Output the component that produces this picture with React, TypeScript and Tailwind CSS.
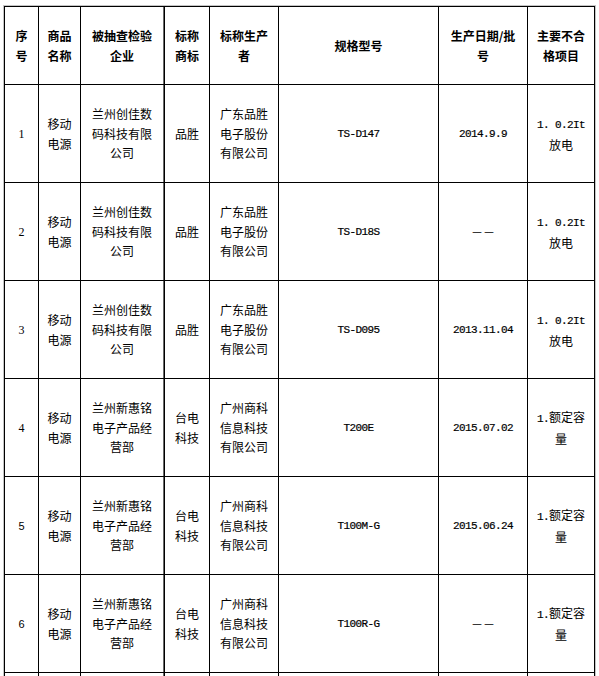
import React from "react";

type Cell = { lines: string[]; kind?: "cjk" | "mono" | "serif" | "sans" };

const header: string[][] = [
  ["序", "号"],
  ["商品", "名称"],
  ["被抽查检验", "企业"],
  ["标称", "商标"],
  ["标称生产", "者"],
  ["规格型号"],
  ["生产日期/批", "号"],
  ["主要不合", "格项目"],
];

const rows: Cell[][] = [
  [
    { lines: ["1"], kind: "serif" },
    { lines: ["移动", "电源"] },
    { lines: ["兰州创佳数", "码科技有限", "公司"] },
    { lines: ["品胜"] },
    { lines: ["广东品胜", "电子股份", "有限公司"] },
    { lines: ["TS-D147"], kind: "mono" },
    { lines: ["2014.9.9"], kind: "mono" },
    { lines: ["1. 0.2It", "放电"] },
  ],
  [
    { lines: ["2"], kind: "serif" },
    { lines: ["移动", "电源"] },
    { lines: ["兰州创佳数", "码科技有限", "公司"] },
    { lines: ["品胜"] },
    { lines: ["广东品胜", "电子股份", "有限公司"] },
    { lines: ["TS-D18S"], kind: "mono" },
    { lines: ["－－"] },
    { lines: ["1. 0.2It", "放电"] },
  ],
  [
    { lines: ["3"], kind: "serif" },
    { lines: ["移动", "电源"] },
    { lines: ["兰州创佳数", "码科技有限", "公司"] },
    { lines: ["品胜"] },
    { lines: ["广东品胜", "电子股份", "有限公司"] },
    { lines: ["TS-D095"], kind: "mono" },
    { lines: ["2013.11.04"], kind: "mono" },
    { lines: ["1. 0.2It", "放电"] },
  ],
  [
    { lines: ["4"], kind: "serif" },
    { lines: ["移动", "电源"] },
    { lines: ["兰州新惠铭", "电子产品经", "营部"] },
    { lines: ["台电", "科技"] },
    { lines: ["广州商科", "信息科技", "有限公司"] },
    { lines: ["T200E"], kind: "mono" },
    { lines: ["2015.07.02"], kind: "mono" },
    { lines: ["1.额定容", "量"] },
  ],
  [
    { lines: ["5"], kind: "sans" },
    { lines: ["移动", "电源"] },
    { lines: ["兰州新惠铭", "电子产品经", "营部"] },
    { lines: ["台电", "科技"] },
    { lines: ["广州商科", "信息科技", "有限公司"] },
    { lines: ["T100M-G"], kind: "mono" },
    { lines: ["2015.06.24"], kind: "mono" },
    { lines: ["1.额定容", "量"] },
  ],
  [
    { lines: ["6"], kind: "sans" },
    { lines: ["移动", "电源"] },
    { lines: ["兰州新惠铭", "电子产品经", "营部"] },
    { lines: ["台电", "科技"] },
    { lines: ["广州商科", "信息科技", "有限公司"] },
    { lines: ["T100R-G"], kind: "mono" },
    { lines: ["－－"] },
    { lines: ["1.额定容", "量"] },
  ],
  // 7th row: only its top edge is visible in the frame
  [
    { lines: [] },
    { lines: [] },
    { lines: [] },
    { lines: [] },
    { lines: [] },
    { lines: [] },
    { lines: [] },
    { lines: [] },
  ],
];

function renderLine(line: string, kind: Cell["kind"]) {
  if (kind === "mono") {
    return (
      <span className="font-['Liberation_Mono',monospace] text-[11px] tracking-[-0.6px] [-webkit-text-stroke:0.2px_black]">
        {line}
      </span>
    );
  }
  if (kind === "serif") {
    return <span className="font-['Liberation_Serif',serif] text-[12px]">{line}</span>;
  }
  if (kind === "sans") {
    return <span className="font-['Liberation_Sans',sans-serif] text-[11px]">{line}</span>;
  }
  const m = line.match(/^([0-9A-Za-z. ]+)(.*)$/);
  if (m) {
    return (
      <span>
        <span className="font-['Liberation_Mono',monospace] text-[11px] tracking-[-0.6px] [-webkit-text-stroke:0.2px_black]">
          {m[1]}
        </span>
        <span>{m[2]}</span>
      </span>
    );
  }
  return <span>{line}</span>;
}

export default function App() {
  return (
    <div className="bg-white w-[599px] h-[676px] overflow-hidden">
      <div className="ml-[3px] mt-[5px] w-[593px] border border-[#c4c4c4]">
        <div className="grid grid-cols-[33px_41px_83px_44px_68px_159px_88px_66px] grid-rows-[77px_repeat(7,97px)] gap-px bg-black p-px font-['Noto_Sans_CJK_SC',sans-serif] text-[12px] leading-[19.5px] text-black">
          {header.map((lines, i) => (
            <div
              key={"h" + i}
              className={`bg-white flex flex-col items-center justify-center text-center font-bold whitespace-nowrap ${
                i === 2 ? "border-r border-[#6a6a6a]" : ""
              }`}
            >
              {lines.map((l, j) => (
                <div key={j}>{l}</div>
              ))}
            </div>
          ))}
          {rows.map((row, r) =>
            row.map((cell, c) => (
              <div
                key={r + "-" + c}
                className={`bg-white flex flex-col items-center justify-center text-center whitespace-nowrap ${
                  c === 2 ? "border-r border-[#6a6a6a]" : ""
                }`}
              >
                {cell.lines.map((l, j) => (
                  <div key={j}>{renderLine(l, cell.kind)}</div>
                ))}
              </div>
            ))
          )}
        </div>
      </div>
    </div>
  );
}
